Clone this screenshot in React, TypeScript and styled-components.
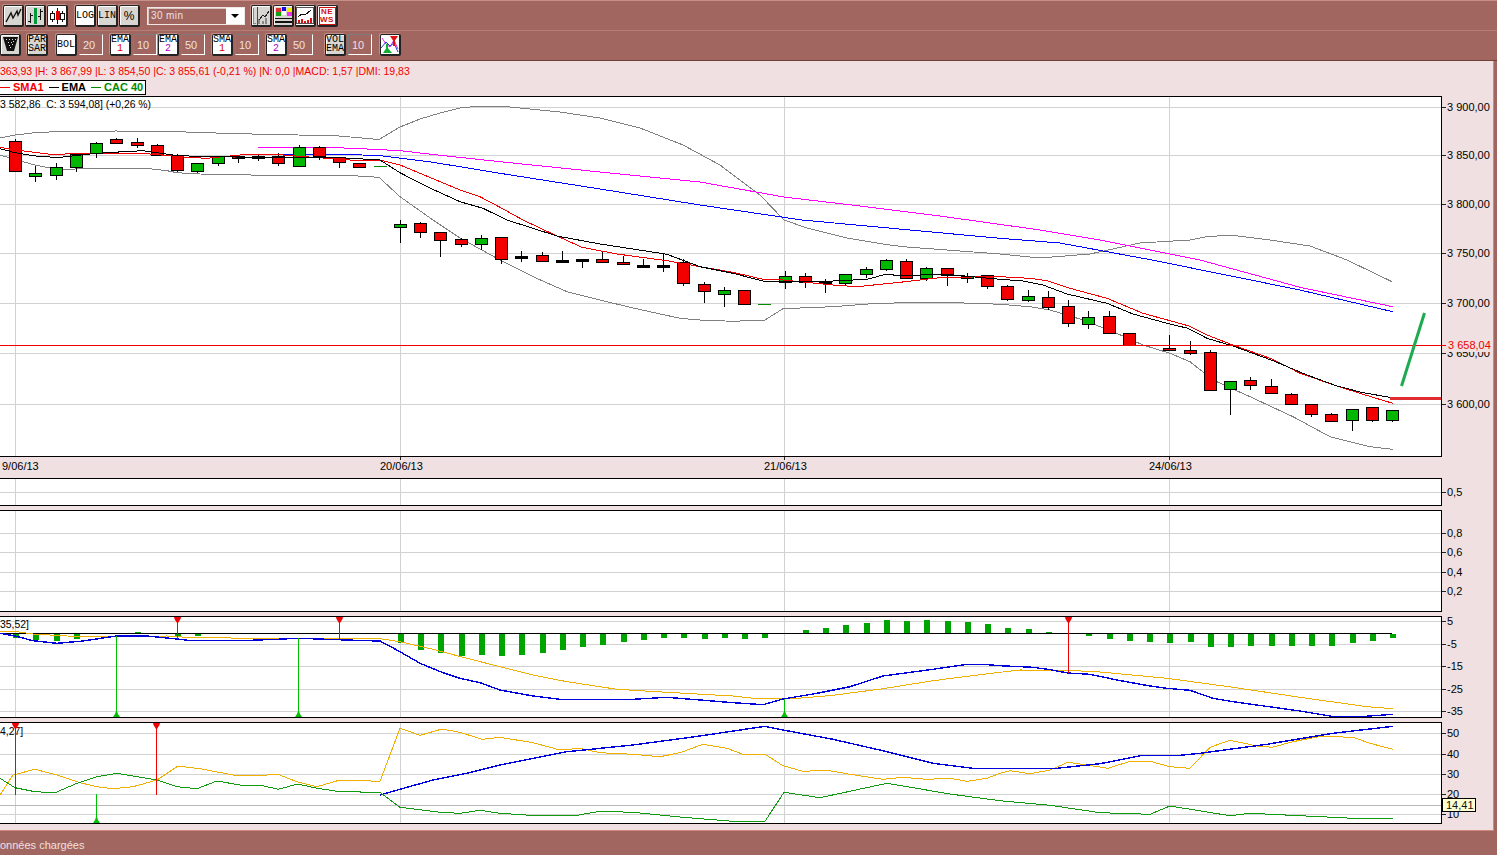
import { ReactNode } from 'react';
import styled, { createGlobalStyle } from 'styled-components';

const BROWN = '#a0665f';
const PINK = '#f0e0e1';
const CHART_WIDTH = 1493;
const PLOT_RIGHT = 1441.5;
const DAY_LINES = [15, 400, 784, 1169];

type Pt = [number, number];
// top, bottom, wick top, wick bottom, kind (r red, g green, k doji, d flat dash)
type Candle = [number, number, number, number, string];

const CANDLES: Candle[] = [
    [141, 171, 139, 171, 'r'], [173, 175.5, 166, 181.5, 'g'], [167, 175, 163, 180, 'g'], [154, 167, 153, 172, 'g'],
    [143, 153, 142, 158, 'g'], [139, 142.5, 138, 144, 'r'], [142, 145, 138, 148, 'r'], [145, 155, 144, 155, 'r'],
    [155, 170, 154, 172, 'r'], [163, 171, 163, 173, 'g'], [156.5, 163, 156, 166, 'g'], [156.5, 158, 155, 163, 'r'],
    [156.5, 158.5, 155, 161, 'g'], [156, 163, 153, 166, 'r'], [147, 166, 145, 166, 'g'], [147, 156, 146, 160, 'r'],
    [157.5, 162, 156.5, 167.5, 'r'], [163, 166.5, 163, 166.5, 'r'], [166, 166, 166, 166, 'd'], [224, 226.5, 220, 242.5, 'g'],
    [223, 232, 222, 237.5, 'r'], [232, 240, 232, 256.5, 'r'], [239, 244, 238, 246.5, 'r'], [238, 244, 235, 250, 'g'],
    [237, 259, 237, 264, 'r'], [256, 257.5, 251, 262, 'k'], [255, 261, 252, 261, 'r'], [260, 261.5, 251, 263, 'k'],
    [259, 260.5, 259, 268, 'k'], [259, 262, 251.5, 263, 'r'], [262, 264, 256, 264, 'r'], [265, 266.5, 259, 268, 'k'],
    [265, 266.5, 254, 271.5, 'k'], [262, 283, 259, 285.5, 'r'], [284, 291, 282, 302.5, 'r'], [290, 294, 287, 306.5, 'g'],
    [290, 304, 290, 304, 'r'], [304, 304, 304, 304, 'd'], [276, 282, 271, 288.5, 'g'], [276, 282, 273, 287.5, 'r'],
    [281, 283, 279, 292.5, 'k'], [274, 283, 274, 285, 'g'], [269, 274, 267, 278, 'g'], [260, 269, 259, 271, 'g'],
    [261, 278, 259, 278, 'r'], [268, 278, 267, 281, 'g'], [268, 275, 268, 285.5, 'r'], [276, 278, 273, 282.5, 'g'],
    [275, 286, 275, 288.5, 'r'], [286, 299, 285, 300.5, 'r'], [296, 300, 290, 301.5, 'g'], [297, 307, 291, 310, 'r'],
    [306, 323, 300, 326.5, 'r'], [317, 324, 311, 328.5, 'g'], [316, 333, 311, 333, 'r'], [333, 345, 333, 345, 'r'],
    [345, 345, 345, 345, 'd'], [348, 350, 335, 350, 'r'], [350, 353, 341, 355, 'r'], [352, 390, 350, 390, 'r'],
    [381, 389, 381, 414.5, 'g'], [380, 385, 377, 390, 'r'], [386, 393, 379, 394, 'r'], [394, 404, 393, 405, 'r'],
    [404, 414, 404, 416.5, 'r'], [414, 421, 413, 421, 'r'], [409, 420, 409, 430.5, 'g'], [407, 420, 407, 422, 'r'],
    [410, 420, 410, 422, 'g'],
];

const BOL_UP: Pt[] = [[0, 138], [15, 135], [35, 132.7], [55, 131.7], [116, 131], [177, 131.7], [237, 133.7], [298, 135], [339, 136], [379, 139.5], [400, 127], [420, 119], [440, 113], [460, 108], [481, 106], [500, 106], [520, 108], [560, 112], [600, 118], [640, 128], [683, 145], [720, 165], [760, 195], [784, 220], [807, 228], [847, 238], [883, 244], [903, 246.7], [1000, 254], [1040, 258], [1090, 254], [1140, 243], [1190, 240], [1205, 237], [1230, 235], [1270, 240], [1310, 246], [1347, 260], [1392, 281.7]];
const BOL_LOW: Pt[] = [[0, 155], [15, 159.5], [35, 165], [55, 169], [75, 169], [96, 168], [143, 168], [167, 170.7], [177, 172.7], [200, 174], [233, 174.7], [267, 175.3], [347, 175.3], [379, 177.3], [400, 196.7], [433, 220], [460, 238], [500, 260], [533, 276.7], [567, 291.7], [600, 300], [633, 308], [680, 318.3], [700, 320], [733, 321.3], [765, 320], [783, 308.7], [800, 308], [833, 306.7], [877, 303.3], [933, 302.3], [977, 303.3], [1000, 304.3], [1030, 306.7], [1050, 310], [1083, 320], [1113, 331.7], [1143, 345], [1170, 353.3], [1190, 361.7], [1213, 380], [1250, 396.7], [1293, 416.7], [1330, 436.7], [1370, 446.7], [1392.7, 449.3]];
const SMA: Pt[] = [[0, 147.3], [15, 150], [35, 152.3], [50, 154.3], [100, 153.3], [150, 154], [187, 157.3], [207, 158.3], [247, 154.3], [283, 155], [313, 157.3], [350, 160], [380, 160], [400, 165], [420, 173.3], [460, 190], [480, 196.7], [500, 207.3], [523, 220], [557, 236], [582, 247.3], [617, 254], [667, 260.7], [700, 266.7], [733, 272.3], [763, 279.3], [783, 280], [833, 285], [857, 286.7], [900, 282.3], [943, 277.3], [1000, 276.7], [1030, 278.3], [1047, 280.7], [1070, 288.3], [1107, 298.3], [1143, 313.3], [1170, 320.7], [1188, 325.7], [1207, 335], [1233, 345], [1273, 359.3], [1300, 373.3], [1337, 386], [1363, 394.3], [1392.7, 403.3]];
const EMA: Pt[] = [[0, 148.7], [15, 152.7], [40, 156.7], [60, 157.3], [90, 154], [113, 152.3], [143, 150.7], [173, 155], [200, 156.7], [267, 157.3], [333, 157.3], [380, 160], [400, 172.7], [427, 186.7], [460, 201.7], [483, 208.3], [507, 220], [557, 236], [600, 244], [667, 254.3], [700, 266.7], [733, 273.3], [763, 281], [833, 281], [867, 279.3], [887, 274], [900, 276], [943, 274], [1000, 279.3], [1023, 281], [1043, 285], [1067, 294], [1107, 303.3], [1133, 314], [1167, 323.3], [1188, 328.3], [1207, 338.3], [1233, 346], [1273, 360.7], [1307, 375], [1337, 386], [1363, 392.7], [1390, 397.3]];
const EMA_SLOW: Pt[] = [[258, 147.3], [327, 147.3], [367, 149], [400, 150.7], [447, 156], [500, 161.7], [600, 172], [700, 182], [784, 197], [860, 206], [940, 216], [1040, 230], [1100, 240], [1200, 260], [1300, 287.3], [1392.7, 306.7]];
const EMA_FAST: Pt[] = [[268, 154.3], [348, 154.3], [383, 156], [433, 162.3], [500, 173.3], [600, 189], [700, 205], [802, 220], [1000, 238.3], [1060, 243], [1152, 260], [1300, 290], [1392.7, 311.7]];

const MACD_LINE: Pt[] = [[0, 633.3], [15, 636], [33, 640.7], [57, 643.3], [83, 641], [116, 636], [147, 636], [177, 639], [188, 640.3], [250, 640.3], [277, 639.3], [298, 638.3], [367, 640.7], [380, 641], [400, 651.7], [420, 663.3], [443, 672.7], [460, 678.3], [480, 682.7], [500, 690], [533, 696], [560, 699.3], [633, 699.3], [667, 697.3], [700, 700], [733, 702.7], [763, 704.7], [783, 699], [817, 693.3], [850, 686.7], [883, 676], [933, 669.3], [967, 664.3], [983, 664.3], [1000, 665.7], [1033, 667.3], [1050, 669.7], [1068, 673], [1090, 674.3], [1117, 680], [1150, 686], [1167, 688.3], [1190, 690.3], [1213, 698.3], [1233, 701.7], [1300, 711], [1333, 716.5], [1363, 716.5], [1393, 714.3]];
const MACD_SIGNAL: Pt[] = [[0, 631], [17, 631.7], [33, 634], [67, 636], [113, 636.7], [167, 636], [187, 637.3], [250, 638.3], [380, 638.7], [400, 641.7], [433, 649.3], [467, 658.3], [500, 666.7], [533, 675], [567, 681.7], [617, 689.3], [667, 692.3], [733, 696], [757, 698.7], [793, 698.7], [833, 695.3], [883, 688.7], [933, 680.7], [1000, 672.3], [1020, 670], [1067, 670.3], [1100, 672], [1167, 678.3], [1233, 687.3], [1300, 697.3], [1367, 706.7], [1393, 708.7]];
// bar length from the zero line, positive goes down
const MACD_BARS = [4, 5.7, 6.7, 4.7, 0, -1.3, -2.3, -1.3, 1.7, 1.7, 0, 0, 0, 0, -1.3, -1.3, 0, 0, 0, 9.3, 15.7, 19.3, 21.7, 20.7, 21.7, 20.7, 18.7, 15.7, 12.7, 10.7, 7.7, 5.7, 3.7, 3.7, 4.7, 3.7, 4.7, 3.7, -1.3, -4.3, -6.3, -9.3, -11.3, -14.3, -13.3, -14.3, -13.3, -12.3, -10.3, -6.3, -5.3, -2.3, 0, 1.7, 4.7, 6.7, 7.7, 8.7, 7.7, 12.7, 12.7, 11.7, 11.7, 11.7, 11.7, 11.7, 8.7, 6.7, 3.7];

const DMI_ADX: Pt[] = [[0, 795], [13, 775], [35, 769.3], [57, 775], [80, 782.7], [97, 786.7], [113, 788.7], [133, 786.7], [157, 780], [178, 766], [200, 768.7], [233, 775], [257, 776], [277, 774], [297, 781.7], [317, 786.7], [340, 780], [380, 781.3], [400, 728.3], [420, 735.3], [442, 729], [460, 732.3], [482, 739.3], [500, 737.3], [533, 742.7], [560, 750], [580, 748.3], [600, 752.7], [633, 754.3], [660, 756.7], [680, 752.7], [703, 744.3], [727, 748.3], [743, 754.3], [765, 754.3], [783, 765.7], [803, 771.3], [827, 770.3], [850, 774.3], [883, 779.3], [903, 777.3], [927, 779.3], [950, 778.3], [967, 781.3], [987, 778.3], [1000, 773.3], [1010, 770.7], [1030, 773.7], [1050, 770], [1068, 762.3], [1087, 765], [1108, 768.3], [1130, 761.3], [1150, 761.3], [1170, 766.7], [1190, 768.3], [1210, 747.3], [1230, 740.3], [1257, 746], [1272, 747.3], [1293, 741.7], [1320, 736.3], [1353, 737.3], [1370, 743.3], [1393, 749.3]];
const DMI_TREND: Pt[] = [[380, 795], [400, 789.3], [433, 780], [467, 773.3], [500, 765], [567, 751.7], [633, 745], [700, 736], [765, 726.3], [783, 730], [833, 739.3], [887, 751.7], [933, 763.3], [973, 768.3], [1053, 768.7], [1100, 763.7], [1143, 755.3], [1180, 755.3], [1200, 753.3], [1267, 744.3], [1333, 733.3], [1393, 726.3]];
const DMI_LOW: Pt[] = [[0, 778.3], [15, 787.7], [35, 791.7], [55, 792.7], [77, 783.3], [97, 776.7], [117, 773.3], [157, 780], [177, 786.7], [197, 788.7], [217, 781], [240, 785], [260, 785], [278, 789.3], [298, 784], [317, 788.3], [340, 791.7], [380, 792.3], [400, 807.3], [440, 812.3], [460, 813.3], [480, 810.3], [500, 813.3], [530, 815.3], [573, 816], [600, 811.3], [633, 812.3], [683, 817.3], [733, 821.3], [765, 821.3], [784, 792.3], [820, 797.7], [887, 783.3], [950, 794], [1000, 800.7], [1050, 805.3], [1100, 812.7], [1150, 814.3], [1170, 806], [1230, 815.7], [1250, 813.3], [1333, 817.3], [1353, 818.3], [1393, 818.3]];

const toPoints = (pts: Pt[]) => pts.map(([x, y]) => `${x},${y}`).join(' ');
const slotX = (i: number) => Math.round(15 + 20.25 * i);
const snap = (v: number) => Math.floor(v) + 0.5;

const GlobalStyle = createGlobalStyle`
    html, body {
        margin: 0;
        padding: 0;
        background: ${BROWN};
    }
`;

const Page = styled.div`
    width: 1497px;
    height: 855px;
    overflow: hidden;
    display: flex;
    flex-direction: column;
    background: ${BROWN};
    font-family: 'Liberation Sans', Arial, sans-serif;
`;

const Toolbar = styled.div`
    height: 61px;
    flex: none;
    box-sizing: border-box;
    padding-top: 1px;
    border-top: 1px solid #c98f86;
    border-bottom: 1px solid #6e4038;
    display: flex;
    flex-direction: column;
`;

const ToolRow = styled.div<{ $height: number; $left: number }>`
    height: ${(p) => p.$height}px;
    box-sizing: border-box;
    padding-left: ${(p) => p.$left}px;
    display: flex;
    align-items: center;

    & + & {
        border-top: 1px solid #b47d75;
    }
`;

const Group = styled.div<{ $after?: number }>`
    display: flex;
    align-items: center;
    gap: 1px;
    margin-right: ${(p) => p.$after ?? 7}px;
`;

const ToolButton = styled.div<{ $on?: boolean; $width?: number }>`
    width: ${(p) => p.$width ?? 21}px;
    height: 22px;
    box-sizing: border-box;
    display: flex;
    flex-direction: column;
    align-items: center;
    justify-content: center;
    background: ${(p) => (p.$on ? '#fff' : '#d8d6d0')};
    color: #000;
    border: 1px solid #222;
    border-right-width: 2px;
    border-bottom-width: 2px;
    border-radius: 2px;
    box-shadow: inset 1px 1px 0 #fff, -1px -1px 0 #c08e86;
    font-family: 'Liberation Mono', monospace;
    font-size: 10px;
    line-height: 9px;
`;

const PercentLabel = styled.span`
    font-family: 'Liberation Sans', Arial, sans-serif;
    font-size: 12px;
    line-height: 12px;
`;

const SubDigit = styled.span<{ $color: string }>`
    color: ${(p) => p.$color};
`;

const ValueBox = styled.div`
    width: 24px;
    height: 21px;
    margin-left: 1px;
    box-sizing: border-box;
    display: flex;
    align-items: center;
    padding-left: 3px;
    color: #f0e0e1;
    font-size: 11px;
    border: 1px solid;
    border-color: #7c7c7c #fff #fff #7c7c7c;
`;

const Select = styled.div`
    width: 98px;
    height: 18px;
    box-sizing: border-box;
    display: flex;
    border: 1px solid #f2e6e4;
    box-shadow: inset 1px 1px 0 #d9c6c2;
    color: #f0e0e1;
    font-size: 10px;
    letter-spacing: 0.4px;
`;

const SelectText = styled.div`
    flex: 1;
    padding-left: 3px;
    line-height: 16px;
`;

const SelectArrow = styled.div`
    width: 18px;
    background: #fff;
    display: flex;
    align-items: center;
    justify-content: center;

    &::after {
        content: '';
        border-left: 4px solid transparent;
        border-right: 4px solid transparent;
        border-top: 4px solid #000;
    }
`;

const Content = styled.div`
    height: 770px;
    flex: none;
    box-sizing: border-box;
    margin-right: 3px;
    background: ${PINK};
    border-right: 1px solid #d08a7c;
    border-bottom: 1px solid #d08a7c;
    display: flex;
    flex-direction: column;
`;

const InfoLine = styled.div`
    height: 14px;
    margin-top: 3px;
    color: #f00000;
    font-size: 10.5px;
    line-height: 14px;
    white-space: nowrap;
    overflow: hidden;
`;

const Legend = styled.div`
    align-self: flex-start;
    height: 15px;
    box-sizing: border-box;
    width: 147px;
    margin: 2px 0 1px -1px;
    padding-bottom: 1px;
    display: flex;
    align-items: center;
    gap: 5px;
    background: #fff;
    border: 1px solid #000;
    font-size: 11px;
    font-weight: 700;
    white-space: nowrap;
`;

const LegendItem = styled.span<{ $color: string }>`
    display: flex;
    align-items: center;
    gap: 3px;
    color: ${(p) => p.$color};

    &::before {
        content: '';
        width: 10px;
        height: 1px;
        background: ${(p) => p.$color};
    }
`;

const PanelStack = styled.div`
    position: relative;
    display: flex;
    flex-direction: column;
    gap: 4px;
`;

const PanelSvg = styled.svg`
    display: block;
    font-family: 'Liberation Sans', Arial, sans-serif;
    font-size: 11px;
`;

const MainChart = styled(PanelSvg)`
    margin-bottom: -4px;
`;

const Frame = styled.rect<{ $hollow?: boolean }>`
    fill: ${(p) => (p.$hollow ? 'none' : '#fff')};
    stroke: #000;
    shape-rendering: crispEdges;
`;

const GridLine = styled.line<{ $color?: string }>`
    stroke: ${(p) => p.$color ?? '#d2d2d2'};
    shape-rendering: crispEdges;
`;

const Tick = styled.line`
    stroke: #222;
    shape-rendering: crispEdges;
`;

const Curve = styled.polyline<{ $color: string; $width?: number }>`
    fill: none;
    stroke: ${(p) => p.$color};
    stroke-width: ${(p) => p.$width ?? 1};
    shape-rendering: crispEdges;
`;

const Wick = styled.line`
    stroke: #000;
    shape-rendering: crispEdges;
`;

const CandleBody = styled.rect<{ $fill: string }>`
    fill: ${(p) => p.$fill};
    stroke: #000;
    shape-rendering: crispEdges;
`;

const Bar = styled.rect`
    fill: #00a400;
    shape-rendering: crispEdges;
`;

const Spine = styled.line<{ $color: string }>`
    stroke: ${(p) => p.$color};
    shape-rendering: crispEdges;
`;

const Arrow = styled.polygon<{ $color: string }>`
    fill: ${(p) => p.$color};
`;

const AxisText = styled.text<{ $color?: string }>`
    fill: ${(p) => p.$color ?? '#000'};
`;

const ChartNote = styled.text`
    fill: #000;
    font-size: 10.4px;
    white-space: pre;
`;

const ValueTip = styled.div`
    position: absolute;
    left: 1442px;
    top: 702px;
    height: 14px;
    box-sizing: border-box;
    width: 34px;
    padding-left: 3px;
    background: #ffffd2;
    border: 1px solid #000;
    font-size: 11px;
    line-height: 12px;
    color: #111;
`;

const StatusBar = styled.div`
    flex: 1;
    padding-top: 7px;
    color: #f0e0e1;
    font-size: 11px;
    line-height: 14px;
    white-space: nowrap;
`;

function ChartPanel({ top, height, frameHeight, grid, labels, children, main }: {
    top: number;
    height: number;
    frameHeight?: number;
    grid: number[];
    labels: [string, number][];
    children?: ReactNode;
    main?: boolean;
}) {
    const fh = frameHeight ?? height;
    const Root = main ? MainChart : PanelSvg;
    return (
        <Root width={CHART_WIDTH} height={height} viewBox={`0 ${top} ${CHART_WIDTH} ${height}`}>
            <Frame x={-2} y={top + 0.5} width={PLOT_RIGHT + 2} height={fh - 1} />
            {grid.map((y) => (
                <GridLine key={y} x1={0} x2={PLOT_RIGHT} y1={y} y2={y} />
            ))}
            {DAY_LINES.map((x) => (
                <GridLine key={x} x1={x + 0.5} x2={x + 0.5} y1={top + 1} y2={top + fh - 1} />
            ))}
            {labels.map(([text, y]) => (
                <g key={text}>
                    <Tick x1={1442} x2={1446} y1={y} y2={y} />
                    <AxisText x={1447} y={y + 3.5}>{text}</AxisText>
                </g>
            ))}
            {children}
            <Frame $hollow x={-2} y={top + 0.5} width={PLOT_RIGHT + 2} height={fh - 1} />
        </Root>
    );
}

function Candles() {
    return (
        <g>
            {CANDLES.map(([t, b, wt, wb, kind], i) => {
                const x = slotX(i);
                if (kind === 'd') {
                    return <Spine key={i} $color="#008a00" x1={x - 6} x2={x + 7} y1={snap(t)} y2={snap(t)} />;
                }
                const fill = kind === 'r' ? '#f20000' : kind === 'g' ? '#00b800' : '#000';
                return (
                    <g key={i}>
                        <Wick x1={x + 0.5} x2={x + 0.5} y1={wt} y2={wb} />
                        <CandleBody $fill={fill} x={x - 5.5} y={snap(t)} width={12} height={Math.max(1, Math.round(b - t))} />
                    </g>
                );
            })}
        </g>
    );
}

function Signal({ x, from, to, up }: { x: number; from: number; to: number; up?: boolean }) {
    const color = up ? '#00c000' : '#f00000';
    const head = up
        ? `${x - 3},${to} ${x + 4},${to} ${x + 2},${to - 3} ${x + 1},${to - 6} ${x},${to - 6} ${x - 1},${to - 3}`
        : `${x - 3},${from} ${x + 4},${from} ${x + 3.5},${from + 2} ${x + 1},${from + 6} ${x},${from + 6} ${x - 2.5},${from + 2}`;
    return (
        <g>
            <Spine $color={color} x1={x + 0.5} x2={x + 0.5} y1={from} y2={to} />
            <Arrow $color={color} points={head} />
        </g>
    );
}

function LineIcon() {
    return (
        <svg width="17" height="17" viewBox="0 0 17 17">
            <polyline points="1,15 6,6 8,11 12,4 13,8 16,2" fill="none" stroke="#111" strokeWidth="1.4" />
        </svg>
    );
}

function BarsIcon() {
    return (
        <svg width="17" height="18" viewBox="0 0 17 18" shapeRendering="crispEdges">
            <path d="M3.5 6V16M1 14H3.5M3.5 8H6M13.5 2V13M11 9H13.5M13.5 4H16" fill="none" stroke="#111" />
            <rect x="7" y="1" width="3" height="16" fill="#009a3c" />
        </svg>
    );
}

function CandleIcon() {
    return (
        <svg width="17" height="18" viewBox="0 0 17 18" shapeRendering="crispEdges">
            <path d="M3.5 4V15M13.5 4V15M8.5 1V17" fill="none" stroke="#111" />
            <rect x="1.5" y="6.5" width="4" height="6" fill="#fff" stroke="#111" />
            <rect x="11.5" y="6.5" width="4" height="6" fill="#fff" stroke="#111" />
            <rect x="6.5" y="4" width="4" height="9" fill="#e00000" />
        </svg>
    );
}

function TrashIcon() {
    return (
        <svg width="15" height="16" viewBox="0 0 15 16">
            <polygon points="0,1 15,1 11,15 4,15" fill="#111" />
            <path d="M3 3h1v1H3zM6 3h1v1H6zM9 3h1v1H9zM12 3h1v1h-1zM5 6h1v1H5zM8 6h1v1H8zM10 5h1v1h-1zM6 9h1v1H6zM9 8h1v1H9zM7 11h1v1H7z" fill="#ddd" />
        </svg>
    );
}

function ScaleIcon() {
    return (
        <svg width="18" height="18" viewBox="0 0 18 18" shapeRendering="crispEdges">
            <path d="M1 17V1" stroke="#888" fill="none" />
            <path d="M2 16h2v1H2zM6 12h2v5H6zM10 14h2v3h-2zM13 11h2v6h-2z" fill="#888" />
            <polyline points="7,13 11,8 13,10 17,4" fill="none" stroke="#222" />
            <rect x="5" y="0" width="1" height="18" fill="#d01010" />
        </svg>
    );
}

function PaletteIcon() {
    return (
        <svg width="17" height="17" viewBox="0 0 17 17" shapeRendering="crispEdges">
            <rect x="1" y="1" width="5" height="4" fill="#e03030" />
            <rect x="7" y="0" width="4" height="4" fill="#1010e0" />
            <rect x="12" y="1" width="5" height="4" fill="#f0f000" />
            <rect x="1" y="5" width="5" height="4" fill="#10a010" />
            <rect x="7" y="4" width="4" height="4" fill="#fff" />
            <rect x="12" y="5" width="5" height="4" fill="#f030f0" />
            <rect x="0" y="11" width="17" height="1" fill="#111" />
            <rect x="0" y="14" width="17" height="2" fill="#111" />
        </svg>
    );
}

function ReportIcon() {
    return (
        <svg width="18" height="18" viewBox="0 0 18 18" shapeRendering="crispEdges">
            <rect x="0.5" y="0.5" width="17" height="16" fill="#fff" stroke="#555" />
            <polyline points="2,10 6,7 9,8 15,3" fill="none" stroke="#111" />
            <path d="M2 13h2v3H2zM5 12h2v4H5zM8 14h2v2H8zM11 13h2v3h-2zM14 11h2v5h-2z" fill="#e01010" />
        </svg>
    );
}

const NewsBox = styled.div`
    width: 15px;
    height: 16px;
    border: 1px solid #d01010;
    color: #d01010;
    font-family: 'Liberation Sans', Arial, sans-serif;
    font-size: 8px;
    line-height: 8px;
    font-weight: 700;
    text-align: center;
    letter-spacing: 0.5px;
`;

function CrossIcon() {
    return (
        <svg width="18" height="19" viewBox="0 0 18 19">
            <polyline points="1,3 5,9 9,12 13,5 17,14" fill="none" stroke="#e020e0" />
            <polyline points="0,13 5,7 9,11 13,8 17,17" fill="none" stroke="#2040d0" />
            <polygon points="9,1 17,1 13,7" fill="#e01010" />
            <rect x="12" y="4" width="2" height="7" fill="#e01010" />
            <polygon points="2,18 11,18 6,12" fill="#10b030" />
            <rect x="5" y="9" width="2" height="6" fill="#10b030" />
        </svg>
    );
}

function App() {
    return (
        <Page>
            <GlobalStyle />
            <Toolbar>
                <ToolRow $height={28} $left={3}>
                    <Group>
                        <ToolButton><LineIcon /></ToolButton>
                        <ToolButton><BarsIcon /></ToolButton>
                        <ToolButton $on><CandleIcon /></ToolButton>
                    </Group>
                    <Group>
                        <ToolButton $on>LOG</ToolButton>
                        <ToolButton>LIN</ToolButton>
                        <ToolButton><PercentLabel>%</PercentLabel></ToolButton>
                    </Group>
                    <Group $after={6}>
                        <Select>
                            <SelectText>30 min</SelectText>
                            <SelectArrow />
                        </Select>
                    </Group>
                    <Group>
                        <ToolButton><ScaleIcon /></ToolButton>
                        <ToolButton><PaletteIcon /></ToolButton>
                        <ToolButton $on><ReportIcon /></ToolButton>
                        <ToolButton $on><NewsBox>NE<br />WS</NewsBox></ToolButton>
                    </Group>
                </ToolRow>
                <ToolRow $height={28} $left={0}>
                    <Group $after={6}><ToolButton><TrashIcon /></ToolButton></Group>
                    <Group $after={8}><ToolButton>PAR<br />SAR</ToolButton></Group>
                    <Group>
                        <ToolButton $on>BOL</ToolButton>
                        <ValueBox>20</ValueBox>
                    </Group>
                    <Group $after={1}>
                        <ToolButton $on>EMA<SubDigit $color="#e00000">1</SubDigit></ToolButton>
                        <ValueBox>10</ValueBox>
                    </Group>
                    <Group $after={7}>
                        <ToolButton $on>EMA<SubDigit $color="#b000c0">2</SubDigit></ToolButton>
                        <ValueBox>50</ValueBox>
                    </Group>
                    <Group $after={7}>
                        <ToolButton $on>SMA<SubDigit $color="#e00000">1</SubDigit></ToolButton>
                        <ValueBox>10</ValueBox>
                    </Group>
                    <Group $after={12}>
                        <ToolButton $on>SMA<SubDigit $color="#b000c0">2</SubDigit></ToolButton>
                        <ValueBox>50</ValueBox>
                    </Group>
                    <Group $after={8}>
                        <ToolButton>VOL<br />EMA</ToolButton>
                        <ValueBox>10</ValueBox>
                    </Group>
                    <Group><ToolButton $on><CrossIcon /></ToolButton></Group>
                </ToolRow>
            </Toolbar>

            <Content>
                <InfoLine>363,93 |H: 3 867,99 |L: 3 854,50 |C: 3 855,61 (-0,21 %) |N: 0,0 |MACD: 1,57 |DMI: 19,83</InfoLine>
                <Legend>
                    <LegendItem $color="#f00000">SMA1</LegendItem>
                    <LegendItem $color="#000">EMA</LegendItem>
                    <LegendItem $color="#008a00">CAC 40</LegendItem>
                </Legend>

                <PanelStack>
                    <ChartPanel
                        main
                        top={96}
                        height={382}
                        frameHeight={361}
                        grid={[107.5, 155.5, 204.5, 253.5, 303.5, 353.5, 404.5]}
                        labels={[['3 900,00', 107.5], ['3 850,00', 155.5], ['3 800,00', 204.5], ['3 750,00', 253.5], ['3 700,00', 303.5], ['3 650,00', 353.5], ['3 600,00', 404.5]]}
                    >
                        <ChartNote x={0} y={108}>3 582,86  C: 3 594,08] (+0,26 %)</ChartNote>
                        <Curve $color="#808080" points={toPoints(BOL_UP)} />
                        <Curve $color="#808080" points={toPoints(BOL_LOW)} />
                        <Curve $color="#ff00ff" points={toPoints(EMA_SLOW)} />
                        <Curve $color="#0000ff" points={toPoints(EMA_FAST)} />
                        <Candles />
                        <Curve $color="#f00000" points={toPoints(SMA)} />
                        <Curve $color="#000" points={toPoints(EMA)} />
                        <GridLine $color="#f00000" x1={0} x2={1446} y1={345.5} y2={345.5} />
                        <rect x={1446} y={339} width={46} height={13} fill={PINK} />
                        <AxisText $color="#f00000" x={1448} y={349}>3 658,04</AxisText>
                        <Curve $color="#e02c30" $width={3} points="1390,398.5 1441,398.5" />
                        <line x1={1401.5} y1={386} x2={1424.5} y2={313} stroke="#1eaa50" strokeWidth={3} />
                        <Tick x1={400.5} x2={400.5} y1={456} y2={460} />
                        <Tick x1={784.5} x2={784.5} y1={456} y2={460} />
                        <Tick x1={1169.5} x2={1169.5} y1={456} y2={460} />
                        <AxisText x={2} y={470}>9/06/13</AxisText>
                        <AxisText x={380} y={470}>20/06/13</AxisText>
                        <AxisText x={764} y={470}>21/06/13</AxisText>
                        <AxisText x={1149} y={470}>24/06/13</AxisText>
                    </ChartPanel>

                    <ChartPanel top={478} height={28} grid={[492.5]} labels={[['0,5', 492.5]]} />

                    <ChartPanel
                        top={510}
                        height={102}
                        grid={[533.5, 552.5, 572.5, 591.5]}
                        labels={[['0,8', 533.5], ['0,6', 552.5], ['0,4', 572.5], ['0,2', 591.5]]}
                    />

                    <ChartPanel
                        top={616}
                        height={102}
                        grid={[621.5, 644.5, 666.5, 689.5, 711.5]}
                        labels={[['5', 621.5], ['-5', 644.5], ['-15', 666.5], ['-25', 689.5], ['-35', 711.5]]}
                    >
                        <ChartNote x={0} y={628}>35,52]</ChartNote>
                        {MACD_BARS.map((v, i) => v !== 0 && (
                            <Bar key={i} x={slotX(i) - 2} y={v > 0 ? 634 : 634 + v} width={6} height={Math.abs(v)} />
                        ))}
                        <GridLine $color="#000" x1={0} x2={1392} y1={633.5} y2={633.5} />
                        <Curve $color="#f0b000" points={toPoints(MACD_SIGNAL)} />
                        <Curve $color="#0000d8" $width={1.4} points={toPoints(MACD_LINE)} />
                        <Signal x={177} from={617} to={639} />
                        <Signal x={339} from={617} to={639} />
                        <Signal x={1068} from={617} to={673} />
                        <Signal x={116} from={636} to={717} up />
                        <Signal x={298} from={638} to={717} up />
                        <Signal x={784} from={699} to={717} up />
                    </ChartPanel>

                    <ChartPanel
                        top={722}
                        height={102}
                        grid={[733.5, 754.5, 774.5, 794.5, 814.5]}
                        labels={[['50', 733.5], ['40', 754.5], ['30', 774.5], ['20', 794.5], ['10', 814.5]]}
                    >
                        <GridLine $color="#b8b8b8" x1={0} x2={PLOT_RIGHT} y1={805.5} y2={805.5} />
                        <ChartNote x={0} y={735}>4,27]</ChartNote>
                        <Curve $color="#f0b000" points={toPoints(DMI_ADX)} />
                        <Curve $color="#0000d8" $width={1.4} points={toPoints(DMI_TREND)} />
                        <Curve $color="#109a10" points={toPoints(DMI_LOW)} />
                        <Signal x={15} from={723} to={795} />
                        <Signal x={156} from={723} to={795} />
                        <Signal x={96} from={794} to={823} up />
                    </ChartPanel>

                    <ValueTip>14,41</ValueTip>
                </PanelStack>
            </Content>
            <StatusBar>onnées chargées</StatusBar>
        </Page>
    );
}

export default App;
